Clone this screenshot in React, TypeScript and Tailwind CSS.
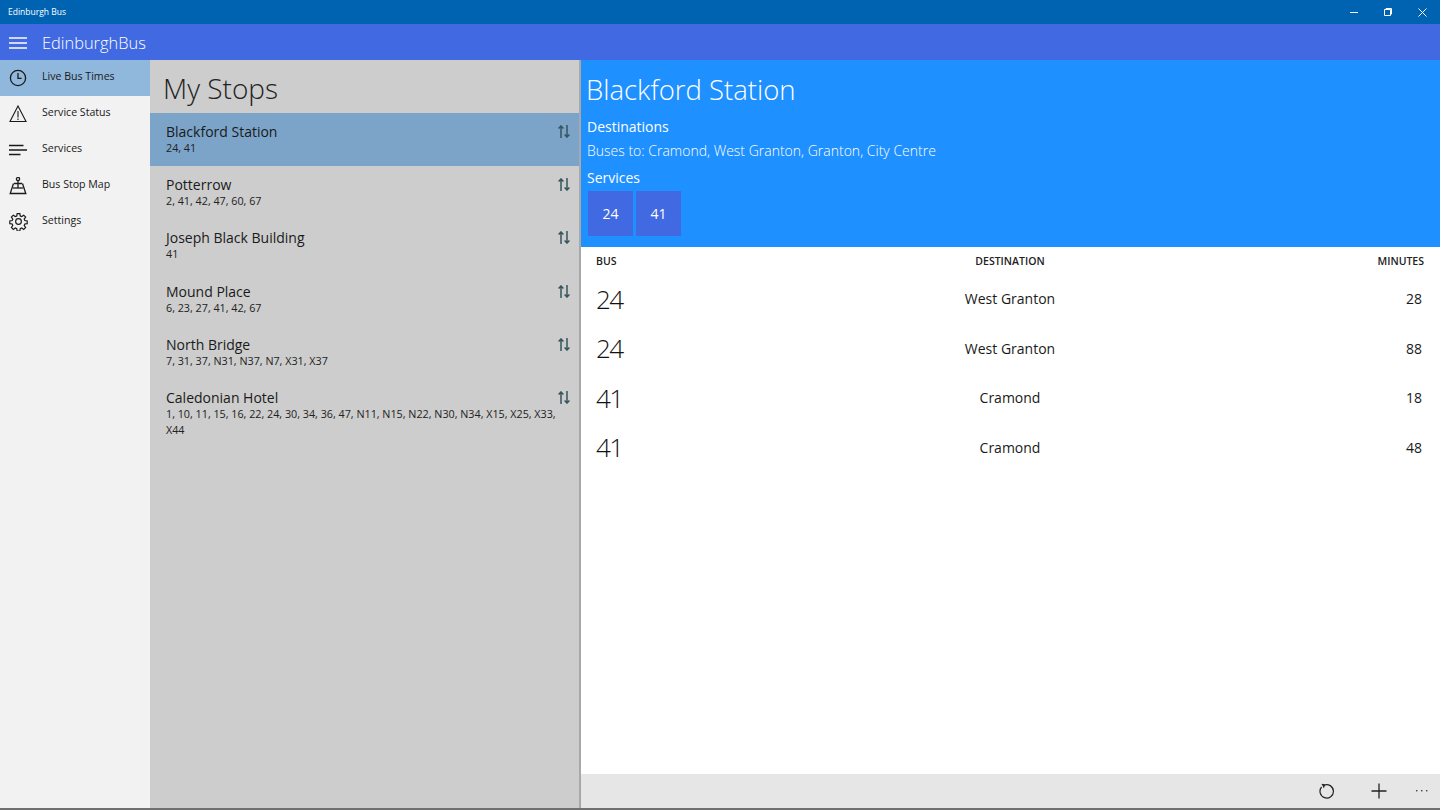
import React from "react";

const font = "font-['Open_Sans','Noto_Sans',sans-serif]";

const stops = [
  { name: "Blackford Station", services: "24, 41", selected: true },
  { name: "Potterrow", services: "2, 41, 42, 47, 60, 67" },
  { name: "Joseph Black Building", services: "41" },
  { name: "Mound Place", services: "6, 23, 27, 41, 42, 67" },
  { name: "North Bridge", services: "7, 31, 37, N31, N37, N7, X31, X37" },
  { name: "Caledonian Hotel", services: "1, 10, 11, 15, 16, 22, 24, 30, 34, 36, 47, N11, N15, N22, N30, N34, X15, X25, X33, X44" },
];

const times = [
  { bus: "24", dest: "West Granton", min: "28" },
  { bus: "24", dest: "West Granton", min: "88" },
  { bus: "41", dest: "Cramond", min: "18" },
  { bus: "41", dest: "Cramond", min: "48" },
];

function Clock() {
  return (
    <svg width="18" height="18" viewBox="0 0 18 18" fill="none" stroke="#1a1a1a" strokeWidth="1.3">
      <circle cx="9" cy="9" r="7.6" />
      <path d="M9 4v5.4h3.6" />
    </svg>
  );
}
function Warn() {
  return (
    <svg width="18" height="18" viewBox="0 0 18 18" fill="none" stroke="#1a1a1a" strokeWidth="1.1">
      <path d="M9 1 17 16.5H1z" />
      <path d="M9 6v6.5M9 13.6v1.5" />
    </svg>
  );
}
function Lines() {
  return (
    <svg width="18" height="18" viewBox="0 0 18 18" fill="none" stroke="#1a1a1a" strokeWidth="1.3">
      <path d="M0 4.5h14.5M0 9h18M0 13.5h11.5" />
    </svg>
  );
}
function MapPin() {
  return (
    <svg width="18" height="18" viewBox="0 0 18 18" fill="none" stroke="#1a1a1a" strokeWidth="1.3">
      <circle cx="9" cy="2" r="1.6" />
      <path d="M9 3.6V11M5 6.5h8M4.5 6.5 1.2 16.5h15.6L13.5 6.5" />
      <path d="M4 11h10" />
    </svg>
  );
}
function Gear() {
  return (
    <svg width="19" height="19" viewBox="0 0 24 24" fill="none" stroke="#1a1a1a" strokeWidth="1.5">
      <path d="M10.3 2h3.4l.5 3 1.9.8 2.5-1.8 2.4 2.4-1.8 2.5.8 1.9 3 .5v3.4l-3 .5-.8 1.9 1.8 2.5-2.4 2.4-2.5-1.8-1.9.8-.5 3h-3.4l-.5-3-1.9-.8-2.5 1.8-2.4-2.4 1.8-2.5-.8-1.9-3-.5v-3.4l3-.5.8-1.9-1.8-2.5 2.4-2.4 2.5 1.8 1.9-.8z" />
      <circle cx="12" cy="12" r="3.6" />
    </svg>
  );
}
function Reorder() {
  return (
    <svg width="12" height="13" viewBox="0 0 12 13" fill="none" stroke="#35565c" strokeWidth="1.5" className="absolute right-[9px] top-[12px]">
      <path d="M3 13V1M.6 3.6 3 1l2.4 2.6" />
      <path d="M9 0v12M6.6 9.4 9 12l2.4-2.6" />
    </svg>
  );
}

const nav = [
  { label: "Live Bus Times", icon: <Clock />, active: true },
  { label: "Service Status", icon: <Warn /> },
  { label: "Services", icon: <Lines /> },
  { label: "Bus Stop Map", icon: <MapPin /> },
  { label: "Settings", icon: <Gear /> },
];

export default function App() {
  return (
    <div className={`${font} flex h-[810px] w-[1440px] flex-col overflow-hidden border-b-2 border-[#707070] bg-white text-[#1a1a1a]`}>
      <div className="flex h-6 shrink-0 items-center justify-between bg-[#0063b1] pl-2 text-white">
        <span className="text-[8.5px] leading-none">Edinburgh Bus</span>
        <div className="flex items-center pr-px">
          <span className="flex w-[34px] justify-center"><span className="h-px w-2 bg-white" /></span>
          <span className="flex w-[34px] justify-center">
            <svg width="8" height="8" viewBox="0 0 8 8" fill="none" stroke="white" strokeWidth="1"><path d="M.5 1.5h6v6h-6zM2 1.5V.5h5.5v5.5h-1" /></svg>
          </span>
          <span className="flex w-[34px] justify-center">
            <svg width="9" height="9" viewBox="0 0 9 9" fill="none" stroke="white" strokeWidth="1"><path d="M.5.5l8 8M8.5.5l-8 8" /></svg>
          </span>
        </div>
      </div>
      <div className="flex h-9 shrink-0 items-center bg-[#4169e1] text-white">
        <div className="flex w-[42px] shrink-0 justify-center pr-[6px] pt-[2px]">
          <svg width="18" height="12" viewBox="0 0 18 12" fill="none" stroke="white" strokeWidth="1.3"><path d="M0 1h18M0 6h18M0 11h18" /></svg>
        </div>
        <span className="pt-[3px] text-[16.4px] font-light leading-none">EdinburghBus</span>
      </div>
      <div className="flex min-h-0 flex-1">
        <nav className="w-[150px] shrink-0 bg-[#f2f2f2]">
          {nav.map((n) => (
            <div key={n.label} className={`flex h-9 items-center ${n.active ? "bg-[#90b8dc]" : ""}`}>
              <div className="flex w-[42px] shrink-0 justify-center pb-[1px] pr-[6px]">{n.icon}</div>
              <span className="pb-[4px] text-[10.6px] leading-none">{n.label}</span>
            </div>
          ))}
        </nav>
        <section className="w-[431px] shrink-0 border-r-2 border-[#a8a8a8] bg-[#cdcdcd]">
          <h1 className="h-[53px] pl-[13px] pt-[8px] text-[28px] font-light leading-[40px] text-[#222]">My Stops</h1>
          {stops.map((s) => (
            <div key={s.name} className={`relative h-[53.2px] pl-[16px] pr-[8px] pt-[10px] ${s.selected ? "bg-[#7ba4c8]" : ""}`}>
              <div className="text-[14px] leading-[18px] text-[#1a1a1a]">{s.name}</div>
              <div className="-mt-px pr-[15px] text-[10.75px] leading-[16px] text-[#222]">{s.services}</div>
              <Reorder />
            </div>
          ))}
        </section>
        <main className="flex min-w-0 flex-1 flex-col">
          <header className="h-[187px] shrink-0 bg-[#1e90ff] pl-[5px] text-white">
            <h2 className="pt-[11px] text-[27.5px] font-light leading-[38px]">Blackford Station</h2>
            <div className="pl-px pt-[8px] text-[14px] leading-[20px]">Destinations</div>
            <div className="pl-px pt-[4px] text-[14px] font-light leading-[20px]">Buses to: Cramond, West Granton, Granton, City Centre</div>
            <div className="pl-px pt-[7px] text-[14px] leading-[20px]">Services</div>
            <div className="flex gap-[3px] pl-[2px] pt-[3px]">
              <div className="flex h-[45px] w-[45px] items-center justify-center bg-[#4169e1] text-[14px]">24</div>
              <div className="flex h-[45px] w-[45px] items-center justify-center bg-[#4169e1] text-[14px]">41</div>
            </div>
          </header>
          <div className="flex-1 pl-[15px] pr-[16px]">
            <div className="grid h-[27px] grid-cols-3 items-center pt-[2px] text-[10.5px] font-semibold uppercase text-[#222]">
              <span>Bus</span>
              <span className="text-center">Destination</span>
              <span className="text-right">Minutes</span>
            </div>
            {times.map((t, i) => (
              <div key={i} className="grid h-[49.5px] grid-cols-3 items-center">
                <span className="text-[26px] font-light leading-none tracking-[-1.5px] text-[#111]">{t.bus}</span>
                <span className="text-center text-[14px]">{t.dest}</span>
                <span className="pr-[2px] text-right text-[14px]">{t.min}</span>
              </div>
            ))}
          </div>
          <footer className="flex h-[34px] shrink-0 items-center justify-end bg-[#e6e6e6] pr-px text-[#1a1a1a]">
            <span className="flex w-[52px] justify-center">
              <svg width="16" height="16" viewBox="0 0 16 16" fill="none" stroke="#222" strokeWidth="1.2"><path d="M5 2.2A6.7 6.7 0 1 1 2.6 4" /><path d="M2.8 1.2 5.4 2 4.6 4.6" fill="#222" /></svg>
            </span>
            <span className="flex w-[52px] justify-center">
              <svg width="16" height="16" viewBox="0 0 16 16" fill="none" stroke="#222" strokeWidth="1.3"><path d="M8 .5v15M.5 8h15" /></svg>
            </span>
            <span className="flex w-[34px] justify-center">
              <svg width="12" height="4" viewBox="0 0 12 4" fill="#444"><rect x="0" y="1" width="1.4" height="1.4" /><rect x="5" y="1" width="1.4" height="1.4" /><rect x="10" y="1" width="1.4" height="1.4" /></svg>
            </span>
          </footer>
        </main>
      </div>
    </div>
  );
}
